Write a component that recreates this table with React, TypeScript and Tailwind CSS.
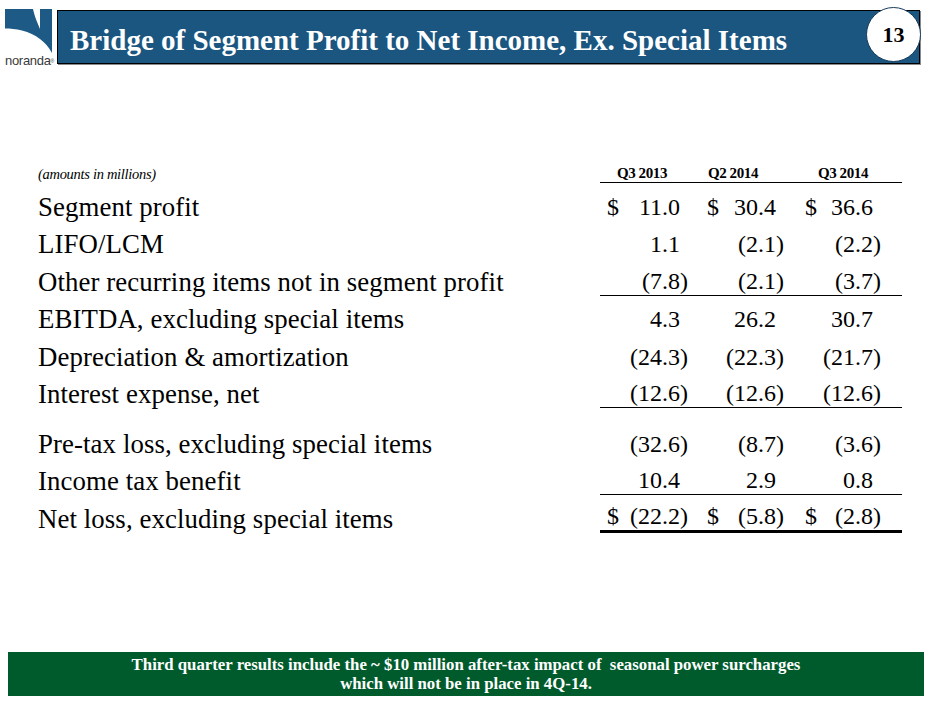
import React from "react";

type Row = {
  label: string;
  values: string[];
  dollar?: boolean;
  rule?: "thin" | "thick";
  gap?: boolean;
};

const rows: Row[] = [
  { label: "Segment profit", values: ["11.0", "30.4", "36.6"], dollar: true },
  { label: "LIFO/LCM", values: ["1.1", "(2.1)", "(2.2)"] },
  { label: "Other recurring items not in segment profit", values: ["(7.8)", "(2.1)", "(3.7)"], rule: "thin" },
  { label: "EBITDA, excluding special items", values: ["4.3", "26.2", "30.7"] },
  { label: "Depreciation & amortization", values: ["(24.3)", "(22.3)", "(21.7)"] },
  { label: "Interest expense, net", values: ["(12.6)", "(12.6)", "(12.6)"], rule: "thin" },
  { label: "Pre-tax loss, excluding special items", values: ["(32.6)", "(8.7)", "(3.6)"], gap: true },
  { label: "Income tax benefit", values: ["10.4", "2.9", "0.8"], rule: "thin" },
  { label: "Net loss, excluding special items", values: ["(22.2)", "(5.8)", "(2.8)"], dollar: true, rule: "thick" },
];

const colPad = ["pl-[7px] pr-[9px]", "pl-[10px] pr-[11px]", "pl-[10px] pr-[21px]"];

function Logo() {
  return (
    <div className="w-[57px] flex flex-col items-start pl-[5px]">
      <svg width="48" height="45" viewBox="0 0 48 45">
        <path
          d="M0 0 H28 C30 9 33 15 35 20 V0 H47 V44 C41 33 31 25 17 21.5 C11 20 5 19.5 0 19.5 Z"
          fill="#1d5a85"
        />
      </svg>
      <div className="text-[13px] leading-[12px] text-[#3a3a3a] mt-[1px] font-['Liberation_Sans',Arial,sans-serif] tracking-[-0.3px]">
        noranda<span className="text-[5px] align-top">®</span>
      </div>
    </div>
  );
}

function Cell({ v, dollar }: { v: string; dollar?: boolean }) {
  const neg = v.startsWith("(");
  return (
    <>
      {dollar && <span>$</span>}
      <span className="ml-auto">
        {v}
        {!neg && <span className="invisible">)</span>}
      </span>
    </>
  );
}

export default function App() {
  return (
    <div className="w-[940px] h-[705px] bg-white overflow-hidden flex flex-col font-['Liberation_Serif','Times_New_Roman',serif] text-black">
      {/* Header */}
      <div className="flex items-start pt-[9px]">
        <Logo />
        <div className="relative mt-[1px] w-[863px] h-[54px] bg-[#1b5680] border border-black shadow-[1px_1px_0_#8a8a8a] flex items-center pl-[12px]">
          <h1 className="text-white font-bold text-[29px] leading-none tracking-[0px] pt-[7px]">
            Bridge of Segment Profit to Net Income, Ex. Special Items
          </h1>
          <div className="absolute left-[808px] top-[-4px] w-[55px] h-[55px] rounded-full bg-white border-[1.5px] border-[#163a5c] flex items-center justify-center">
            <span className="font-bold text-[22px] leading-none">13</span>
          </div>
        </div>
      </div>

      {/* Table */}
      <div className="mt-[98px] ml-[38px] w-[864px]">
        <div className="grid grid-cols-[562px_97px_98px_107px] h-[18px] items-end">
          <div className="italic text-[14.5px] leading-[16px] self-center tracking-[-0.3px]">(amounts in millions)</div>
          <div className="border-b-[1.5px] border-black text-right pr-[30px] font-bold text-[15px] leading-[16px] pb-[1px] tracking-[-0.4px]">Q3 2013</div>
          <div className="border-b-[1.5px] border-black text-right pr-[37px] font-bold text-[15px] leading-[16px] pb-[1px] tracking-[-0.4px]">Q2 2014</div>
          <div className="border-b-[1.5px] border-black text-right pr-[34px] font-bold text-[15px] leading-[16px] pb-[1px] tracking-[-0.4px]">Q3 2014</div>
        </div>
        {rows.map((r) => (
          <div
            key={r.label}
            className={`grid grid-cols-[562px_97px_98px_107px] items-end ${r.gap ? "h-[49.5px]" : "h-[37.5px]"}`}
          >
            <div className="text-[26.8px] leading-[28px] tracking-[0.1px]">{r.label}</div>
            {r.values.map((v, i) => (
              <div
                key={i}
                className={`flex text-[24px] leading-[28px] ${colPad[i]} ${
                  r.rule === "thin" ? "border-b-[1.5px] border-black" : r.rule === "thick" ? "border-b-[3px] border-black" : ""
                }`}
              >
                <Cell v={v} dollar={r.dollar} />
              </div>
            ))}
          </div>
        ))}
      </div>

      {/* Footer */}
      <div className="mt-auto mb-[9px] ml-[8px] w-[916px] h-[44px] bg-[#005b2c] flex flex-col items-center justify-center text-white font-bold text-[16.8px] leading-[19px]">
        <div>Third quarter results include the ~ $10 million after-tax impact of&nbsp; seasonal power surcharges</div>
        <div>which will not be in place in 4Q-14.</div>
      </div>
    </div>
  );
}
